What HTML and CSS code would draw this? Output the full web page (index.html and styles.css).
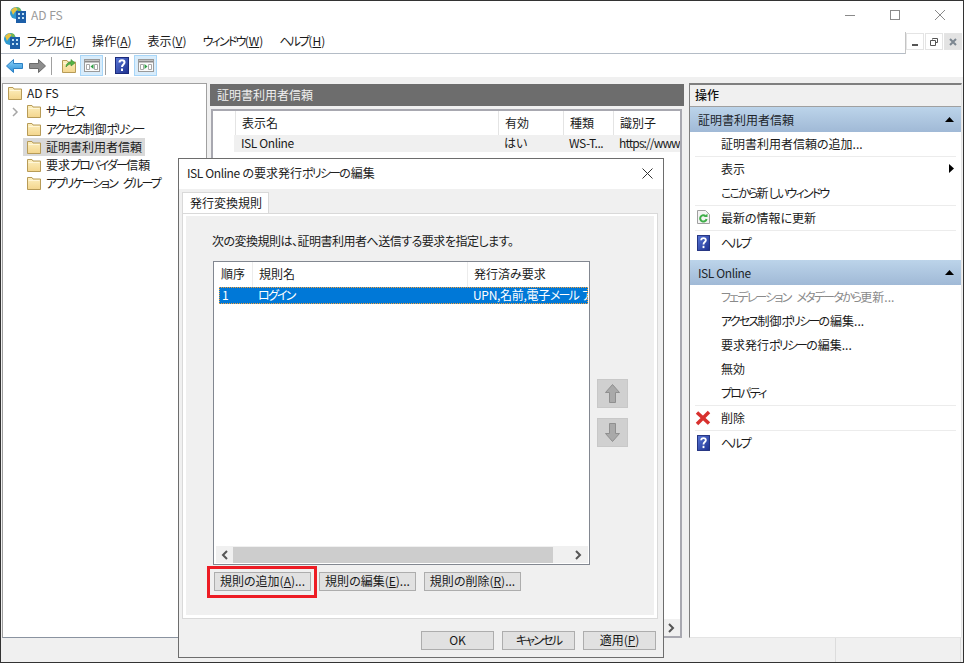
FILE: index.html
```html
<!DOCTYPE html>
<html lang="ja">
<head>
  <meta charset="UTF-8" />
  <title>AD FS</title>
  <link rel="stylesheet" href="styles.css">
</head>
<body>

  <!-- shared icons -->
  <svg class="defs" width="0" height="0">
    <defs>
      <linearGradient id="folderFill" x1="0" y1="0" x2="0" y2="1">
        <stop offset="0" stop-color="#fdf0c0" />
        <stop offset="1" stop-color="#f3d58c" />
      </linearGradient>
      <linearGradient id="helpFill" x1="0" y1="0" x2="1" y2="1">
        <stop offset="0" stop-color="#5a78d8" />
        <stop offset="1" stop-color="#1c2f8e" />
      </linearGradient>
      <linearGradient id="backFill" x1="0" y1="0" x2="0" y2="1">
        <stop offset="0" stop-color="#8fd2f8" />
        <stop offset="1" stop-color="#2a8fd8" />
      </linearGradient>
      <symbol id="folder" viewBox="0 0 16 16">
        <path d="M1.5 2.5h4.5l1 1.5h7.500v10.500h-13z" fill="url(#folderFill)" stroke="#b79b57" />
        <path d="M2.500 5.500h11" stroke="#fff6d8" />
      </symbol>
      <symbol id="help" viewBox="0 0 14 17">
        <rect x="0.500" y="0.500" width="13" height="16" fill="url(#helpFill)" stroke="#1a2a7a" />
        <path d="M4.500 5.500c0-3 5-3 5 0 0 2-2.500 2-2.500 4.500" fill="none" stroke="#fff" stroke-width="2" />
        <rect x="6" y="11.500" width="2" height="2.500" fill="#fff" />
      </symbol>
      <symbol id="app" viewBox="0 0 18 18">
        <circle cx="7" cy="7" r="6" fill="#2f9ad0" />
        <path d="M2 4l4-3 3 2-3 3-2 3z" fill="#e8c341" />
        <path d="M8 1l3 1 1 3-3 0z" fill="#74b84a" />
        <rect x="7" y="5" width="10" height="12" fill="#1d5fa8" />
        <path d="M9 7h2v2h-2zM13 7h2v2h-2zM9 11h2v2h-2zM13 11h2v2h-2z" fill="#bfe0f5" />
      </symbol>
      <symbol id="pane" viewBox="0 0 16 13">
        <rect x="0.500" y="0.500" width="15" height="12" fill="#fafafa" stroke="#9a9a9a" />
        <path d="M1 2.500h14" stroke="#8a8a8a" stroke-width="2" />
        <path d="M2.500 5.500h3v5h-3zM10.500 5.500h3v5h-3z" fill="#fff" stroke="#a8a8a8" />
      </symbol>
    </defs>
  </svg>

  <div class="window">

    <!-- title bar -->
    <div class="titlebar">
      <svg class="app-icon" width="18" height="18"><use href="#app" /></svg>
      <span class="title-text">AD FS</span>
      <div class="win-controls">
        <svg width="12" height="12" viewBox="0 0 12 12"><path d="M1 6.500h10" stroke="#8a8a8a" /></svg>
        <svg width="12" height="12" viewBox="0 0 12 12"><rect x="1.500" y="1.500" width="9" height="9" fill="none" stroke="#8a8a8a" /></svg>
        <svg width="12" height="12" viewBox="0 0 12 12"><path d="M1 1l10 10M11 1l-10 10" stroke="#8a8a8a" /></svg>
      </div>
    </div>

    <!-- menu bar -->
    <div class="menubar">
      <svg class="menu-icon" width="18" height="18"><use href="#app" /></svg>
      <span class="menu-item"><span class="k">ファイル</span>(<u>F</u>)</span>
      <span class="menu-item">操作(<u>A</u>)</span>
      <span class="menu-item">表示(<u>V</u>)</span>
      <span class="menu-item"><span class="k">ウィンドウ</span>(<u>W</u>)</span>
      <span class="menu-item"><span class="k">ヘルプ</span>(<u>H</u>)</span>
      <div class="mdi-controls">
        <span class="mdi-btn"><svg width="10" height="10" viewBox="0 0 10 10"><path d="M2 8h6" stroke="#555" stroke-width="2" /></svg></span>
        <span class="mdi-btn"><svg width="10" height="10" viewBox="0 0 10 10"><path d="M3.500 2.500v-1h5v4h-1.500M1.500 3.500h5v5h-5z" fill="none" stroke="#555" /></svg></span>
        <span class="mdi-btn mdi-close"><svg width="10" height="10" viewBox="0 0 10 10"><path d="M2 2l6 6M8 2l-6 6" stroke="#7d8791" stroke-width="2" /></svg></span>
      </div>
    </div>

    <!-- toolbar -->
    <div class="toolbar">
      <svg class="tool-arrow" width="17" height="14" viewBox="0 0 17 14"><path d="M.5 7l7-6.500v4h9v5h-9v4z" fill="url(#backFill)" stroke="#2c80c4" /></svg>
      <svg class="tool-arrow" width="17" height="14" viewBox="0 0 17 14"><path d="M16.500 7l-7-6.500v4h-9v5h9v4z" fill="#8d8d8d" stroke="#6b6b6b" /></svg>
      <span class="tool-sep"></span>
      <svg class="tool-folder" width="16" height="16" viewBox="0 0 16 16">
        <use href="#folder" />
        <path d="M5 9c0-3 2-5 5-5v-2.500l4 3.500-4 3v-2c-2 0-3 1-5 3z" fill="#55b545" stroke="#3d8a32" stroke-width=".6" />
      </svg>
      <span class="tool-btn">
        <svg width="16" height="13" viewBox="0 0 16 13"><use href="#pane" /><path d="M9.500 5v5l-3-2.500z" fill="#2f9e44" /></svg>
      </span>
      <span class="tool-sep"></span>
      <svg class="tool-help" width="14" height="17"><use href="#help" /></svg>
      <span class="tool-btn">
        <svg width="16" height="13" viewBox="0 0 16 13"><use href="#pane" /><path d="M6.500 5v5l3-2.500z" fill="#2f9e44" /></svg>
      </span>
    </div>

    <div class="workspace">

      <!-- left tree -->
      <div class="tree">
        <div class="tree-row root">
          <svg width="16" height="16"><use href="#folder" /></svg>
          <span>AD FS</span>
        </div>
        <div class="tree-row">
          <svg class="tree-chevron" width="7" height="10" viewBox="0 0 7 10"><path d="M1 1l4 4-4 4" fill="none" stroke="#a6a6a6" stroke-width="1.500" /></svg>
          <svg width="16" height="16"><use href="#folder" /></svg>
          <span><span class="k">サービス</span></span>
        </div>
        <div class="tree-row">
          <svg width="16" height="16"><use href="#folder" /></svg>
          <span><span class="k">アクセス</span>制御<span class="k">ポリシー</span></span>
        </div>
        <div class="tree-row selected">
          <svg width="16" height="16"><use href="#folder" /></svg>
          <span>証明書利用者信頼</span>
        </div>
        <div class="tree-row">
          <svg width="16" height="16"><use href="#folder" /></svg>
          <span>要求<span class="k">プロバイダー</span>信頼</span>
        </div>
        <div class="tree-row">
          <svg width="16" height="16"><use href="#folder" /></svg>
          <span><span class="k">アプリケーション グループ</span></span>
        </div>
      </div>

      <!-- center list -->
      <div class="center">
        <div class="center-head">証明書利用者信頼</div>
        <div class="trust-list">
          <div class="trust-cols">
            <span class="col-name">表示名</span>
            <span class="col-on">有効</span>
            <span class="col-type">種類</span>
            <span class="col-id">識別子</span>
          </div>
          <div class="trust-row">
            <span class="col-name latin">ISL Online</span>
            <span class="col-on">はい</span>
            <span class="col-type latin">WS-T...</span>
            <span class="col-id url">https://www</span>
          </div>
          <div class="trust-foot">
            <span class="scroll-end">
              <svg width="7" height="10" viewBox="0 0 7 10"><path d="M1 1l4 4-4 4" fill="none" stroke="#555" stroke-width="2" /></svg>
            </span>
          </div>
        </div>
      </div>

      <!-- right actions -->
      <div class="actions">
        <div class="actions-head">操作</div>
        <div class="section-head">
          <span>証明書利用者信頼</span>
          <svg width="9" height="5" viewBox="0 0 9 5"><path d="M4.500 0l4.500 5h-9z" fill="#000" /></svg>
        </div>
        <div class="action">証明書利用者信頼の追加...</div>
        <div class="action-sep"></div>
        <div class="action action-more">表示
          <svg width="5" height="9" viewBox="0 0 5 9"><path d="M0 0l5 4.500-5 4.500z" fill="#000" /></svg>
        </div>
        <div class="action"><span class="k">ここから</span>新<span class="k">しいウィンドウ</span></div>
        <div class="action-sep"></div>
        <div class="action">
          <svg class="action-icon" width="13" height="14" viewBox="0 0 13 14">
            <path d="M.5.500h8l4 4v9h-12z" fill="#f4f4f4" stroke="#a0a0a0" />
            <path d="M9.500 9a3.200 3.200 0 1 1-1-3" fill="none" stroke="#3fae49" stroke-width="2" />
            <path d="M7 7h3.500v-3.500z" fill="#3fae49" />
          </svg>
          最新の情報に更新
        </div>
        <div class="action-sep"></div>
        <div class="action">
          <svg class="action-icon" width="13" height="16"><use href="#help" /></svg>
          <span class="k">ヘルプ</span>
        </div>

        <div class="section-head second">
          <span class="latin">ISL Online</span>
          <svg width="9" height="5" viewBox="0 0 9 5"><path d="M4.500 0l4.500 5h-9z" fill="#000" /></svg>
        </div>
        <div class="action disabled"><span class="k">フェデレーション メタデータから</span>更新...</div>
        <div class="action"><span class="k">アクセス</span>制御<span class="k">ポリシー</span>の編集...</div>
        <div class="action">要求発行<span class="k">ポリシー</span>の編集...</div>
        <div class="action">無効</div>
        <div class="action"><span class="k">プロパティ</span></div>
        <div class="action-sep"></div>
        <div class="action">
          <svg class="action-icon wide" width="16" height="16" viewBox="0 0 16 16">
            <path d="M2 2.500l12 11M14 2l-12 12" fill="none" stroke="#d8312e" stroke-width="3.500" />
          </svg>
          削除
        </div>
        <div class="action-sep"></div>
        <div class="action">
          <svg class="action-icon" width="13" height="16"><use href="#help" /></svg>
          <span class="k">ヘルプ</span>
        </div>
      </div>
    </div>

    <!-- status bar -->
    <div class="statusbar">
      <span class="status-cell"></span>
      <span class="status-cell last"></span>
    </div>
  </div>

  <!-- properties dialog, floats over the main window -->
  <div class="dialog">
    <div class="dialog-title">
      <span><span class="latin">ISL Online</span> の要求発行<span class="k">ポリシー</span>の編集</span>
      <svg width="11" height="11" viewBox="0 0 11 11"><path d="M.5.500l10 10M10.500.500l-10 10" stroke="#333" /></svg>
    </div>
    <div class="tabs">
      <span class="tab">発行変換規則</span>
    </div>
    <div class="tab-panel">
      <div class="tab-inner">
        <p class="intro">次の変換規則は、証明書利用者へ送信する要求を指定します。</p>
        <div class="rule-area">
          <div class="rule-list">
            <div class="rule-cols">
              <span class="rule-order">順序</span>
              <span class="rule-name">規則名</span>
              <span class="rule-claim">発行済み要求</span>
            </div>
            <div class="rule-row">
              <span class="rule-order">1</span>
              <span class="rule-name"><span class="k">ログイン</span></span>
              <span class="rule-claim">UPN,名前,電子<span class="k">メール アドレス</span></span>
            </div>
            <div class="rule-fill"></div>
            <div class="rule-scroll">
              <svg width="7" height="10" viewBox="0 0 7 10"><path d="M6 1l-4 4 4 4" fill="none" stroke="#555" stroke-width="2" /></svg>
              <span class="scroll-thumb"></span>
              <svg width="7" height="10" viewBox="0 0 7 10"><path d="M1 1l4 4-4 4" fill="none" stroke="#555" stroke-width="2" /></svg>
            </div>
          </div>
          <div class="move-btns">
            <span class="move-btn">
              <svg width="15" height="19" viewBox="0 0 15 19"><path d="M7.500.500l7 8h-4v10h-6v-10h-4z" fill="#a9a9a9" stroke="#8f8f8f" /></svg>
            </span>
            <span class="move-btn">
              <svg width="15" height="19" viewBox="0 0 15 19"><path d="M7.500 18.500l7-8h-4v-10h-6v10h-4z" fill="#a9a9a9" stroke="#8f8f8f" /></svg>
            </span>
          </div>
        </div>
        <div class="rule-btns">
          <span class="add-wrap">
            <button class="btn rule-btn">規則の追加(<u>A</u>)...</button>
            <span class="highlight"></span>
          </span>
          <button class="btn rule-btn">規則の編集(<u>E</u>)...</button>
          <button class="btn rule-btn">規則の削除(<u>R</u>)...</button>
        </div>
      </div>
    </div>
    <div class="dialog-foot">
      <button class="btn foot-btn">OK</button>
      <button class="btn foot-btn"><span class="k">キャンセル</span></button>
      <button class="btn foot-btn">適用(<u>P</u>)</button>
    </div>
  </div>

</body>
</html>
```
FILE: styles.css
```css
html, body {
  margin: 0;
  padding: 0;
}
body {
  width: 964px;
  height: 663px;
  overflow: hidden;
  position: relative;
  font-family: "Noto Sans CJK JP", "Noto Sans", sans-serif;
  font-size: 12px;
  font-feature-settings: "palt";
  line-height: 18px;
  color: #1a1a1a;
  background: #333;
}
svg {
  display: block;
  flex: none;
}
.defs {
  position: absolute;
}
.latin {
  letter-spacing: -0.4px;
}
/* katakana runs are set tight, the UI font has narrow kana */
.k {
  letter-spacing: -1.8px;
  word-spacing: 5px;
}
.window {
  box-sizing: border-box;
  width: 964px;
  height: 663px;
  display: flex;
  flex-direction: column;
  border: 1px solid #333;
  background: #f0f0f0;
}

/* title bar */
.titlebar {
  height: 27px;
  flex: none;
  display: flex;
  align-items: center;
  background: #fff;
  padding-left: 8px;
}
.title-text {
  margin-left: 4px;
  color: #9a9a9a;
}
.win-controls {
  margin-left: auto;
  display: flex;
  gap: 33px;
  padding-right: 17px;
}

/* menu bar */
.menubar {
  height: 25px;
  flex: none;
  display: flex;
  align-items: center;
  background: #fff;
  border-bottom: 1px solid #b4bcc6;
  padding-left: 2px;
}
.menu-icon {
  margin-right: 6px;
}
.menu-item {
  margin-right: 16px;
}
.mdi-controls {
  box-sizing: border-box;
  margin-left: auto;
  display: flex;
  gap: 1px;
  align-items: flex-start;
  align-self: flex-end;
  height: 22px;
  padding: 1px 1px 0 0;
  border-left: 1px solid #c4c4c4;
  margin-bottom: -1px;
  background: #fff;
}
.mdi-btn {
  box-sizing: border-box;
  width: 18px;
  height: 17px;
  border: 1px solid #e4e4e4;
  background: #fff;
  display: flex;
  align-items: center;
  justify-content: center;
}
.mdi-close {
  background: #e3e3e3;
}

/* toolbar */
.toolbar {
  height: 23px;
  flex: none;
  display: flex;
  align-items: center;
  background: #fff;
  padding-left: 5px;
}
.tool-arrow {
  margin-right: 6px;
}
.tool-sep {
  width: 1px;
  height: 18px;
  background: #a0a0a0;
  margin: 0 9px 0 -1px;
}
.tool-folder {
  margin-right: 3px;
}
.tool-btn {
  box-sizing: border-box;
  width: 23px;
  height: 21px;
  display: flex;
  align-items: center;
  justify-content: center;
  background: #d8ecfb;
  border: 1px solid #a8d6f8;
  margin-right: 3px;
}
.tool-help {
  margin-right: 5px;
}

/* main area */
.workspace {
  flex: 1;
  display: flex;
  min-height: 0;
  padding: 6px 1px 0 1px;
  background: #f0f0f0;
}
.tree {
  box-sizing: border-box;
  width: 205px;
  flex: none;
  height: 555px;
  background: #fff;
  border: 1px solid #a0a0a0;
  border-bottom-color: #8a93a0;
  margin-right: 3px;
}
.tree-row {
  height: 18px;
  display: flex;
  align-items: center;
  padding-left: 23px;
  width: 122px;
  position: relative;
  white-space: nowrap;
}
.tree-row > span {
  margin-left: 4px;
}
.tree-row.root {
  padding-left: 4px;
}
.tree-row.selected {
  background: #d9d9d9;
  margin-left: 20px;
  padding-left: 3px;
  width: 119px;
}
.tree-chevron {
  position: absolute;
  left: 9px;
  top: 5px;
}

/* center list */
.center {
  width: 474px;
  flex: none;
  margin: 1px 5px 0 0;
  height: 554px;
  display: flex;
  flex-direction: column;
}
.center-head {
  height: 22px;
  flex: none;
  line-height: 21px;
  background: #6d6d6d;
  color: #f0f0f0;
  padding-left: 7px;
}
.trust-list {
  flex: 1;
  margin: 3px 2px 0 1px;
  background: #fff;
  border: 2px solid #a8a8b0;
  display: flex;
  flex-direction: column;
}
.trust-cols, .trust-row {
  display: flex;
  white-space: nowrap;
  overflow: hidden;
}
.trust-cols {
  height: 24px;
  line-height: 24px;
  margin-left: 22px;
}
.trust-cols span {
  border-left: 1px solid #e4e4e4;
}
.trust-row {
  height: 17px;
  line-height: 15px;
  background: #f0f0f0;
  margin-left: 21px;
  padding-left: 1px;
}
.col-name {
  box-sizing: border-box;
  width: 263px;
  padding-left: 6px;
  flex: none;
}
.col-on {
  box-sizing: border-box;
  width: 65px;
  padding-left: 6px;
  flex: none;
}
.col-type {
  box-sizing: border-box;
  width: 50px;
  padding-left: 6px;
  flex: none;
}
.col-id {
  box-sizing: border-box;
  padding-left: 6px;
  flex: 1;
}
.url {
  letter-spacing: -0.9px;
}
.trust-foot {
  margin-top: auto;
  display: flex;
  justify-content: flex-end;
}
.scroll-end {
  width: 17px;
  height: 17px;
  background: #f0f0f0;
  display: flex;
  align-items: center;
  justify-content: center;
}

/* right actions */
.actions {
  box-sizing: border-box;
  width: 273px;
  flex: none;
  height: 555px;
  background: #fff;
  border-top: 2px solid #7f7f7f;
  border-left: 1px solid #7f7f7f;
  border-bottom: 1px solid #e4e4e4;
  border-right: 1px solid #e4e4e4;
}
.actions-head {
  box-sizing: border-box;
  height: 22px;
  line-height: 20px;
  background: #f0f0f0;
  padding-left: 5px;
  border-bottom: 1px solid #a0a0a0;
  color: #111;
  font-weight: 500;
}
.section-head {
  height: 25px;
  display: flex;
  align-items: center;
  justify-content: space-between;
  padding: 0 7px 0 8px;
  background: linear-gradient(#bcd4ea, #a0b9d6);
  color: #20242a;
}
.section-head.second {
  margin-top: 5px;
}
.action {
  height: 24px;
  line-height: 24px;
  padding-left: 31px;
  position: relative;
  white-space: nowrap;
}
.action.disabled {
  color: #8a8a8a;
}
.action-more svg {
  position: absolute;
  right: 7px;
  top: 7px;
}
.action-sep {
  height: 1px;
  margin: 0 5px;
  background: #ececec;
}
.action-icon {
  position: absolute;
  left: 7px;
  top: 4px;
}
.action-icon.wide {
  left: 5px;
}

/* status bar */
.statusbar {
  height: 24px;
  flex: none;
  display: flex;
  justify-content: flex-end;
  margin-top: 1px;
}
.status-cell {
  width: 124px;
  border-left: 1px solid #dcdcdc;
}
.status-cell.last {
  width: 2px;
}

/* dialog */
.dialog {
  position: absolute;
  left: 178px;
  top: 158px;
  box-sizing: border-box;
  width: 486px;
  height: 500px;
  background: #f0f0f0;
  border: 1px solid #6d6d6d;
  display: flex;
  flex-direction: column;
}
.dialog-title {
  box-sizing: border-box;
  height: 30px;
  flex: none;
  background: #fff;
  display: flex;
  align-items: center;
  justify-content: space-between;
  padding: 0 10px 2px 8px;
  color: #222;
}
.tabs {
  display: flex;
  height: 21px;
  margin: 3px 0 0 3px;
  flex: none;
}
.tab {
  box-sizing: border-box;
  width: 87px;
  background: #fff;
  border: 1px solid #d9d9d9;
  border-bottom: none;
  padding-left: 7px;
  line-height: 19px;
}
.tab-panel {
  box-sizing: border-box;
  height: 406px;
  margin: 0 5px 0 3px;
  padding: 2px 3px 3px 3px;
  background: #fff;
  border: 1px solid #d9d9d9;
  flex: none;
}
.tab-inner {
  height: 100%;
  background: #f0f0f0;
  padding-left: 27px;
  padding-top: 16px;
  box-sizing: border-box;
}
.intro {
  margin: 0 0 11px -1px;
  letter-spacing: -0.5px;
}
.rule-area {
  display: flex;
  height: 304px;
}
.rule-list {
  box-sizing: border-box;
  width: 377px;
  flex: none;
  background: #fff;
  border: 1px solid #828790;
  display: flex;
  flex-direction: column;
  overflow: hidden;
}
.rule-cols, .rule-row {
  display: flex;
  white-space: nowrap;
}
.rule-cols {
  height: 25px;
  line-height: 23px;
}
.rule-row {
  height: 17px;
  line-height: 15px;
  background: #0078d7;
  color: #fff;
  margin: 0 1px 0 5px;
  outline: 1px dotted #f7a13a;
  outline-offset: -1px;
  overflow: hidden;
}
.rule-order {
  box-sizing: border-box;
  width: 38px;
  padding-left: 7px;
  flex: none;
}
.rule-row .rule-order {
  width: 33px;
  padding-left: 3px;
}
.rule-name {
  box-sizing: border-box;
  width: 215px;
  padding-left: 6px;
  flex: none;
  border-left: 1px solid #ececec;
}
.rule-row .rule-name {
  border-left: none;
}
.rule-claim {
  padding-left: 6px;
  border-left: 1px solid #ececec;
  flex: 1;
}
.rule-row .rule-claim {
  border-left: none;
  letter-spacing: -0.3px;
}
.rule-row .rule-claim .k {
  word-spacing: 3px;
}
.rule-fill {
  flex: 1;
}
.rule-scroll {
  height: 17px;
  margin: 0 1px 1px 2px;
  display: flex;
  align-items: center;
  background: #f0f0f0;
  padding: 0 7px 0 5px;
}
.scroll-thumb {
  flex: none;
  width: 320px;
  height: 16px;
  background: #cdcdcd;
  margin: 0 22px 0 5px;
}
.move-btns {
  display: flex;
  flex-direction: column;
  gap: 10px;
  margin: 118px 0 0 7px;
}
.move-btn {
  width: 31px;
  height: 29px;
  background: #d0d0d0;
  border: 1px solid #c8c8c8;
  box-sizing: border-box;
  display: flex;
  align-items: center;
  justify-content: center;
}
.btn {
  box-sizing: border-box;
  height: 19px;
  padding: 0 0 2px 0;
  background: #e1e1e1;
  border: 1px solid #adadad;
  font-family: inherit;
  font-size: 12px;
  font-feature-settings: "palt";
  line-height: 15px;
  color: #1a1a1a;
}
.rule-btns {
  display: flex;
  gap: 8px;
  margin: 7px 0 0 1px;
}
.rule-btn {
  width: 97px;
  display: block;
}
.add-wrap {
  position: relative;
  display: block;
}
.highlight {
  position: absolute;
  left: -7px;
  top: -6px;
  width: 110px;
  height: 32px;
  box-sizing: border-box;
  border: 3px solid #ed1c24;
}
.dialog-foot {
  display: flex;
  justify-content: flex-end;
  gap: 8px;
  padding: 12px 7px 0 0;
}
.foot-btn {
  width: 73px;
}
```
